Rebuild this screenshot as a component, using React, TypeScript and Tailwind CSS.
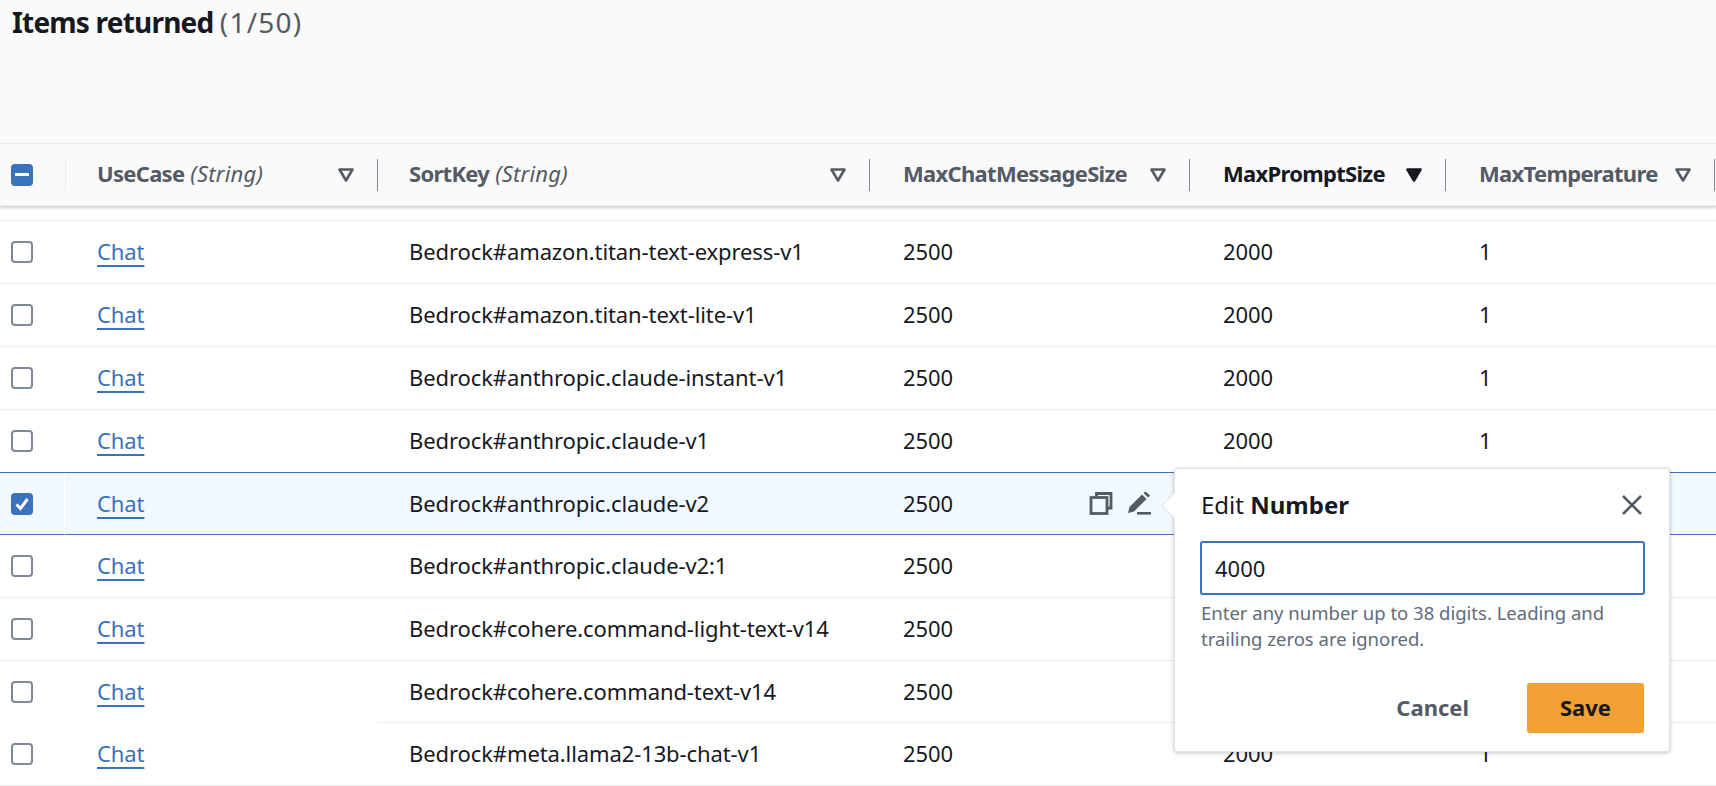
const rows = [
  { key: "Bedrock#amazon.titan-text-express-v1", height: "h-[63px]" },
  { key: "Bedrock#amazon.titan-text-lite-v1", height: "h-[63px]" },
  { key: "Bedrock#anthropic.claude-instant-v1", height: "h-[63px]" },
  { key: "Bedrock#anthropic.claude-v1", height: "h-[63px]", aboveSelected: true },
  { key: "Bedrock#anthropic.claude-v2", height: "h-[62px]", selected: true, covered: true },
  { key: "Bedrock#anthropic.claude-v2:1", height: "h-[63px]", covered: true },
  { key: "Bedrock#cohere.command-light-text-v14", height: "h-[63px]", covered: true },
  { key: "Bedrock#cohere.command-text-v14", height: "h-[62px]", partial: true, covered: true },
  { key: "Bedrock#meta.llama2-13b-chat-v1", height: "h-[63px]" },
];

const FilterIcon = ({ filled = false }: { filled?: boolean }) => (
  <svg width="16" height="14" viewBox="0 0 16 14" className={filled ? "text-[#16191f]" : "text-[#545b64]"}>
    <path
      d="M1.5 1.5 H14.5 L8 12.5 Z"
      fill={filled ? "currentColor" : "none"}
      stroke="currentColor"
      strokeWidth="2.6"
      strokeLinejoin="round"
    />
  </svg>
);

const Checkbox = ({ state }: { state?: "checked" | "mixed" }) => {
  if (!state) {
    return <div className="h-[22px] w-[22px] rounded-[4px] border-2 border-[#7d8998] bg-white" />;
  }
  return (
    <div className="flex h-[22px] w-[22px] items-center justify-center rounded-[4px] bg-[#3a72bb]">
      {state === "checked" ? (
        <svg width="16" height="16" viewBox="0 0 16 16">
          <path d="M2.5 8.5 L6.5 12.5 L13.5 3" fill="none" stroke="white" strokeWidth="3" />
        </svg>
      ) : (
        <div className="h-[3px] w-[14px] bg-white" />
      )}
    </div>
  );
};

const HeaderCell = ({ width, name, type, active = false, last = false }: { width: string; name: string; type?: string; active?: boolean; last?: boolean }) => (
  <div className={`flex h-[32px] items-center ${type ? "pl-[31px]" : "pl-[33px]"} ${width}`}>
    <span className={`mb-[2px] whitespace-nowrap font-bold tracking-[-0.7px] ${active ? "text-[#16191f]" : "text-[#545b64]"}`}>
      {name}
      {type && <span className="font-normal italic tracking-[0.2px]"> {type}</span>}
    </span>
    <div className="ml-auto flex items-center">
      <FilterIcon filled={active} />
      <div className={`ml-[23px] h-[32px] w-px bg-[#7d8998] ${last ? "mr-[1px]" : ""}`} />
    </div>
  </div>
);

const CopyIcon = () => (
  <svg width="24" height="24" viewBox="0 0 24 24" fill="none" stroke="#545b64" strokeWidth="2.8">
    <path d="M7.5 6 V2.5 H22 V17 H18" />
    <rect x="2" y="6.5" width="16" height="16" />
  </svg>
);

const PencilIcon = () => (
  <svg width="24" height="24" viewBox="0 0 24 24" fill="#545b64">
    <path d="M1 22 L2.5 16 L15 3.5 L19.5 8 L7 20.5 Z" />
    <path d="M16.5 2 L18.5 0.5 L23 4.5 L21 6.5 Z" />
    <rect x="10" y="21" width="14" height="2.6" />
  </svg>
);

export default function App() {
  return (
    <div className="relative h-[786px] w-[1716px] overflow-hidden bg-white font-['Noto_Sans',sans-serif] text-[22px] text-[#16191f]">
      <div className="h-[143px] bg-[#fafafa] pl-[12px] pt-[4px]">
        <h1 className="text-[28px] font-bold leading-[36px] tracking-[-0.8px]">
          Items returned <span className="font-normal tracking-[1.2px] text-[#545b64]">(1/50)</span>
        </h1>
      </div>

      {/* Table header */}
      <div className="flex h-[63px] items-center border-y border-[#e9ebed] bg-[#fafafa] shadow-[0_2px_3px_rgba(0,28,36,0.2)]">
        <div className="flex h-[32px] w-[66px] shrink-0 items-center border-r border-[#e9ebed] pl-[11px]">
          <Checkbox state="mixed" />
        </div>
        <HeaderCell width="w-[312px]" name="UseCase" type="(String)" />
        <HeaderCell width="w-[492px]" name="SortKey" type="(String)" />
        <HeaderCell width="w-[320px]" name="MaxChatMessageSize" />
        <HeaderCell width="w-[256px]" name="MaxPromptSize" active />
        <HeaderCell width="w-[270px]" name="MaxTemperature" last />
      </div>

      {/* Table body */}
      <div className="mt-[14px] border-t border-[#e9ebed] tracking-[-0.1px]">
        {rows.map((row) => {
          const line = row.selected || row.aboveSelected ? "border-[#3a72bb]" : "border-[#e9ebed]";
          const leftLine = row.partial ? "border-transparent" : line;
          return (
            <div
              key={row.key}
              className={`flex ${row.height} ${row.selected ? "bg-[#f1f8fe]" : "bg-white"}`}
            >
              <div className={`flex w-[65px] shrink-0 items-center border-b pl-[11px] ${leftLine} ${row.selected ? "border-r border-r-[#ffffff]" : ""}`}>
                <Checkbox state={row.selected ? "checked" : undefined} />
              </div>
              <div className={`flex w-[313px] items-center border-b pb-[1px] pl-[32px] ${leftLine}`}>
                <span className="text-[#3a72bb] underline decoration-2 underline-offset-[5px]">Chat</span>
              </div>
              <div className={`flex w-[492px] items-center border-b pb-[1px] pl-[31px] ${line}`}>{row.key}</div>
              <div className={`flex w-[320px] items-center border-b pb-[1px] pl-[33px] ${line}`}>
                2500
                {row.selected && (
                  <div className="ml-auto mr-[39px] flex items-center gap-[14px]">
                    <CopyIcon />
                    <PencilIcon />
                  </div>
                )}
              </div>
              <div className={`flex w-[256px] items-center border-b pb-[1px] pl-[33px] ${line}`}>{!row.covered && "2000"}</div>
              <div className={`flex w-[270px] items-center border-b pb-[1px] pl-[33px] ${line}`}>{!row.covered && "1"}</div>
            </div>
          );
        })}
      </div>

      {/* Edit popover */}
      <div className="absolute left-[1174px] top-[468px] z-10 h-[284px] w-[496px] rounded-[3px] border border-[#dfe3e6] bg-white px-[26px] shadow-[0_1px_4px_rgba(0,28,36,0.25)]">
        <div className="absolute left-[-10px] top-[27px] h-[19px] w-[19px] rotate-45 border-b border-l border-[#dfe3e6] bg-white" />
        <div className="relative flex h-[72px] items-center justify-between">
          <span className="text-[24px]">
            Edit <span className="font-bold">Number</span>
          </span>
          <svg width="22" height="22" viewBox="0 0 22 22" fill="none" stroke="#545b64" strokeWidth="2.6">
            <path d="M2 2 L20 20 M20 2 L2 20" />
          </svg>
        </div>
        <div className="-ml-px flex h-[54px] w-[445px] items-center rounded-[3px] border-2 border-[#3a72bb] pl-[13px]">4000</div>
        <p className="mt-[5px] w-[445px] text-[18.5px] leading-[26px] text-[#5f6b7a]">
          Enter any number up to 38 digits. Leading and trailing zeros are ignored.
        </p>
        <div className="mt-[31px] flex w-[443px] items-center justify-end">
          <button className="mr-[58px] pb-[2px] font-bold text-[#545b64]">Cancel</button>
          <button className="h-[50px] w-[117px] rounded-[3px] bg-[#f2a033] pb-[2px] font-bold">Save</button>
        </div>
      </div>
    </div>
  );
}
